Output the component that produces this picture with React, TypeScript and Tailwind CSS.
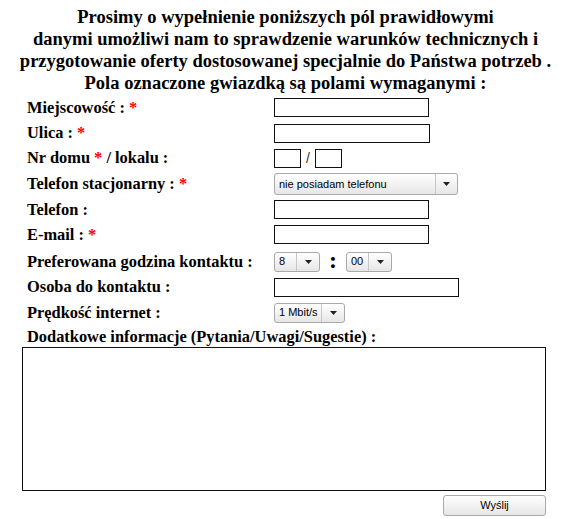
import type { ReactNode } from "react";

const serif = { fontFamily: '"Liberation Serif", "Times New Roman", serif' };

function Star() {
  return <span className="text-[#ff0000]">*</span>;
}

function Box({ w }: { w: string }) {
  return <div className={`h-[19px] border border-[#111] bg-white ${w}`} />;
}

function FakeSelect({ value, w, h, arrowW }: { value: string; w: string; h: string; arrowW: string }) {
  return (
    <div
      className={`flex ${w} ${h} items-stretch rounded-[3px] border border-[#a9a9a9] bg-gradient-to-b from-white to-[#e6e6e6] text-[11px] text-black`}
      style={{ fontFamily: '"Liberation Sans", Arial, sans-serif' }}
    >
      <div className="flex flex-1 items-center pl-[4px] leading-none">{value}</div>
      <div className={`flex ${arrowW} items-center justify-center border-l border-[#c8c8c8]`}>
        <svg width="7" height="4" viewBox="0 0 7 4">
          <path d="M0 0h7L3.5 4z" fill="#222" />
        </svg>
      </div>
    </div>
  );
}

function Row({ h, label, children }: { h: string; label: ReactNode; children?: ReactNode }) {
  return (
    <div className={`flex ${h} items-center`}>
      <div className="w-[247px] shrink-0 font-bold">{label}</div>
      <div className="flex items-center">{children}</div>
    </div>
  );
}

export default function App() {
  return (
    <div className="h-[519px] w-[579px] overflow-hidden bg-white text-black" style={serif}>
      <div className="w-[571px] pt-[6px] text-center text-[18.5px] font-bold leading-[22px]">
        <p>Prosimy o wypełnienie poniższych pól prawidłowymi</p>
        <p>danymi umożliwi nam to sprawdzenie warunków technicznych i</p>
        <p>przygotowanie oferty dostosowanej specjalnie do Państwa potrzeb .</p>
        <p>Pola oznaczone gwiazdką są polami wymaganymi :</p>
      </div>

      <div className="pl-[27px] text-[16.4px] leading-[18px]">
        <Row h="h-[27px]" label={<>Miejscowość : <Star /></>}>
          <Box w="w-[155px]" />
        </Row>
        <Row h="h-[24px]" label={<>Ulica : <Star /></>}>
          <Box w="w-[156px]" />
        </Row>
        <Row h="h-[26px]" label={<>Nr domu <Star /> / lokalu :</>}>
          <Box w="w-[27px]" />
          <span
            className="mx-[5px] text-[14px] text-[#333]"
            style={{ fontFamily: '"Liberation Sans", Arial, sans-serif' }}
          >
            /
          </span>
          <Box w="w-[27px]" />
        </Row>
        <Row h="h-[26px]" label={<>Telefon stacjonarny : <Star /></>}>
          <FakeSelect value="nie posiadam telefonu" w="w-[184px]" h="h-[22px]" arrowW="w-[22px]" />
        </Row>
        <Row h="h-[25px]" label="Telefon :">
          <Box w="w-[155px]" />
        </Row>
        <Row h="h-[25px]" label={<>E-mail : <Star /></>}>
          <Box w="w-[155px]" />
        </Row>
        <Row h="h-[29px]" label="Preferowana godzina kontaktu :">
          <FakeSelect value="8" w="w-[46px]" h="h-[20px]" arrowW="w-[23px]" />
          <span className="mx-[9px] -mt-[4px] text-[24px] font-bold leading-none">:</span>
          <FakeSelect value="00" w="w-[46px]" h="h-[20px]" arrowW="w-[23px]" />
        </Row>
        <Row h="h-[22px]" label="Osoba do kontaktu :">
          <Box w="w-[185px]" />
        </Row>
        <Row h="h-[29px]" label="Prędkość internet  :">
          <FakeSelect value="1 Mbit/s" w="w-[71px]" h="h-[20px]" arrowW="w-[23px]" />
        </Row>
        <div className="flex h-[19px] items-center font-bold">Dodatkowe informacje (Pytania/Uwagi/Sugestie) :</div>
      </div>

      <div className="ml-[22px] mt-[1px] h-[144px] w-[524px] border border-[#111] bg-white" />

      <div className="ml-[443px] mt-[4px] flex h-[21px] w-[103px] items-center justify-center rounded-[3px] border border-[#a9a9a9] bg-gradient-to-b from-white to-[#e6e6e6] text-[11px]"
        style={{ fontFamily: '"Liberation Sans", Arial, sans-serif' }}
      >
        Wyślij
      </div>
    </div>
  );
}
